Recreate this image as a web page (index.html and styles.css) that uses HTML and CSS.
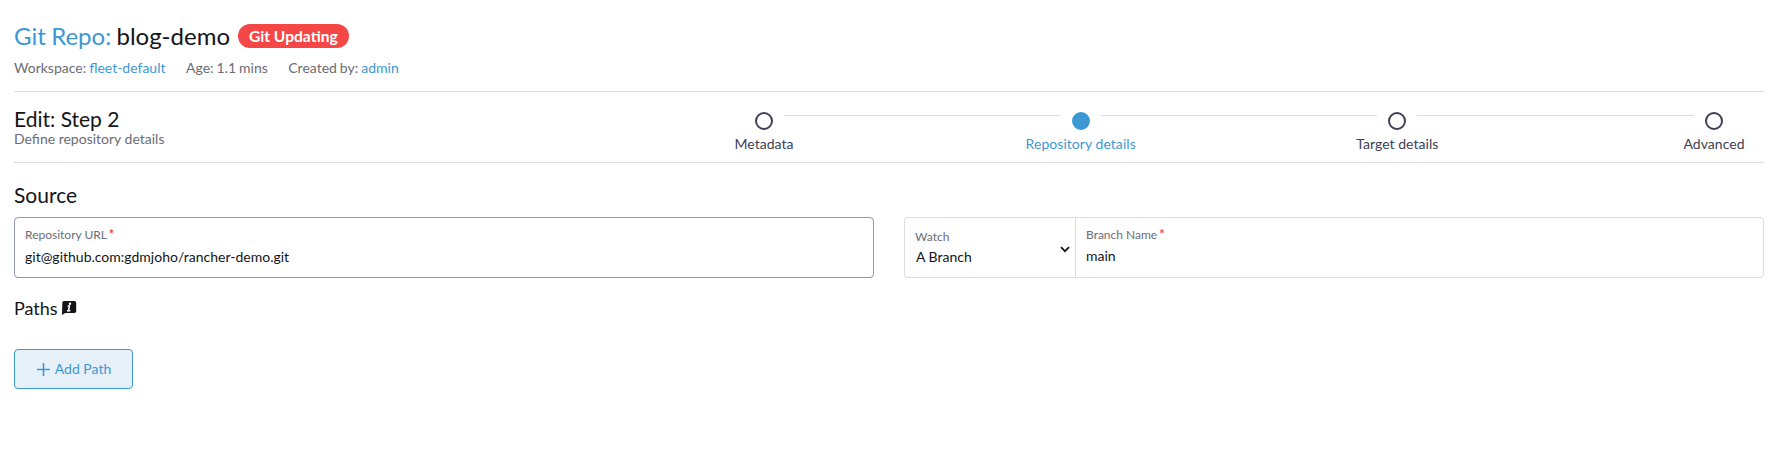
FILE: index.html
```html
<!DOCTYPE html>
<html lang="en">
<head>
    <meta charset="UTF-8">
    <meta name="viewport" content="width=device-width, initial-scale=1.0">
    <title>Git Repo: blog-demo</title>
    <link rel="stylesheet" href="styles.css">
</head>
<body>
    <header class="masthead">
        <div class="title">
            <h1><a class="link" href="#">Git Repo:</a> blog-demo</h1>
            <span class="badge">Git Updating</span>
        </div>
        <div class="subheader">
            <span>Workspace: <a class="link" href="#">fleet-default</a></span>
            <span>Age: 1.1 mins</span>
            <span>Created by: <a class="link" href="#">admin</a></span>
        </div>
    </header>

    <div class="wizard">
        <div class="wizard-title">
            <h2>Edit: Step 2</h2>
            <span class="muted">Define repository details</span>
        </div>
        <ul class="steps">
            <li class="step"><span class="circle"></span><span>Metadata</span></li>
            <li class="divider"></li>
            <li class="step active"><span class="circle"></span><span>Repository details</span></li>
            <li class="divider"></li>
            <li class="step"><span class="circle"></span><span>Target details</span></li>
            <li class="divider"></li>
            <li class="step"><span class="circle"></span><span>Advanced</span></li>
        </ul>
    </div>

    <main>
        <h2 class="source">Source</h2>
        <div class="row">
            <div class="field focused">
                <label for="repo">Repository URL <span class="required">*</span></label>
                <input id="repo" type="text" value="git@github.com:gdmjoho/rancher-demo.git" spellcheck="false">
            </div>
            <div class="input-group">
                <div class="field select">
                    <div class="select-text">
                        <label>Watch</label>
                        <div class="selected">A Branch</div>
                    </div>
                    <svg class="chevron" width="10" height="7" viewBox="0 0 10 7">
                        <path d="M1 1.2l4 4 4-4" fill="none" stroke="#141419" stroke-width="1.7"/>
                    </svg>
                </div>
                <div class="field branch">
                    <label for="branch">Branch Name <span class="required">*</span></label>
                    <input id="branch" type="text" value="main">
                </div>
            </div>
        </div>

        <h3 class="paths">Paths
            <svg width="15" height="14" viewBox="0 0 15 14">
                <path d="M2 0h10.500A1.700 1.700 0 0 1 14.200 1.700v8.600a1.700 1.700 0 0 1-1.700 1.700H3.200L0 14 .3 1.700A1.700 1.700 0 0 1 2 0z" fill="#141419"/>
                <circle cx="8" cy="2.700" r="1.200" fill="#fff"/>
                <path d="M5.600 5H7.400L6.600 9.600M5 9.700h3.300" fill="none" stroke="#fff" stroke-width="1.500"/>
            </svg>
        </h3>
        <button class="add" type="button">
            <svg width="13" height="13" viewBox="0 0 13 13">
                <path d="M6.500 0v13M0 6.500h13" fill="none" stroke="#3d98d3" stroke-width="1.600"/>
            </svg>
            Add Path
        </button>
    </main>
</body>
</html>
```
FILE: styles.css
```css
* {
    box-sizing: border-box;
}
body {
    margin: 0;
    padding: 22px 12px 0 14px;
    background: #fff;
    color: #141419;
    font-family: Lato, sans-serif;
    font-size: 14px;
    line-height: 18px;
}
h1, h2, h3 {
    margin: 0;
    font-weight: 400;
}
h1 {
    font-size: 24px;
    line-height: 28px;
    word-spacing: -0.8px;
}
h2 {
    font-size: 21px;
    line-height: 24px;
}
.link {
    color: #3d98d3;
    text-decoration: none;
}
.masthead {
    height: 70px;
    border-bottom: 1px solid #dcdee7;
}
.title {
    display: flex;
    align-items: center;
    gap: 8px;
}
.badge {
    height: 24px;
    padding: 0 11px;
    border-radius: 12px;
    background: #f64747;
    color: #fff;
    font-size: 15.6px;
    font-weight: 700;
    line-height: 24px;
}
.subheader {
    display: flex;
    gap: 20.5px;
    margin-top: 9px;
    color: #6c6c76;
    word-spacing: -0.6px;
}
.muted {
    color: #6c6c76;
}
.wizard {
    display: flex;
    justify-content: space-between;
    height: 71px;
    border-bottom: 1px solid #dcdee7;
}
.wizard-title {
    display: flex;
    flex-direction: column;
    padding-top: 15px;
}
.wizard-title .muted {
    line-height: 16px;
}
.steps {
    display: flex;
    width: 1050px;
    margin: 0;
    padding: 20px 0 0;
    list-style: none;
    color: #3e4055;
}
.step {
    display: flex;
    flex-direction: column;
    align-items: center;
    gap: 5px;
    width: 100px;
    white-space: nowrap;
    letter-spacing: 0.05px;
}
.circle {
    flex: none;
    width: 18px;
    height: 18px;
    border: 2px solid #3e4055;
    border-radius: 50%;
}
.active {
    color: #3d98d3;
}
.active .circle {
    border-color: #3d98d3;
    background: #3d98d3;
}
.divider {
    flex: 1;
    height: 1px;
    margin: 3px -30px 0;
    background: #dcdee7;
}
.source {
    margin-top: 20px;
}
.row {
    display: grid;
    grid-template-columns: 1fr 1fr;
    gap: 30px;
    margin-top: 10px;
}
.field {
    display: flex;
    flex-direction: column;
    height: 61px;
    padding: 9px 10px 0;
    border: 1px solid #dcdee7;
    border-radius: 4px;
}
.focused {
    border-color: #9496b0;
}
label {
    color: #6c6c76;
    font-size: 12px;
    line-height: 16px;
}
.required {
    margin-left: -1px;
    color: #f64747;
    font-size: 13px;
    font-weight: 700;
    line-height: 1;
}
input {
    width: 100%;
    height: 18px;
    margin: 5px 0 0;
    padding: 0;
    border: 0;
    outline: 0;
    background: none;
    color: #141419;
    font: 14px/18px Lato, sans-serif;
}
.input-group {
    display: flex;
}
.select {
    flex-direction: row;
    justify-content: space-between;
    width: 171px;
    padding: 11px 5px 0 10px;
    border-right: 0;
    border-radius: 4px 0 0 4px;
}
.select label {
    display: block;
}
.selected {
    margin: 3px 0 0 1px;
}
.chevron {
    margin-top: 17px;
}
.branch {
    flex: 1;
    border-radius: 0 4px 4px 0;
}
.branch input {
    margin-top: 4px;
}
.paths {
    display: flex;
    align-items: center;
    gap: 4px;
    margin-top: 18px;
    font-size: 18px;
    line-height: 24px;
}
.add {
    display: flex;
    align-items: center;
    justify-content: center;
    gap: 5px;
    width: 119px;
    height: 40px;
    margin-top: 29px;
    padding: 0 0 0 1px;
    border: 1px solid #3d98d3;
    border-radius: 4px;
    background: #e6f0f8;
    color: #3d98d3;
    font: 14px/18px Lato, sans-serif;
}
```
